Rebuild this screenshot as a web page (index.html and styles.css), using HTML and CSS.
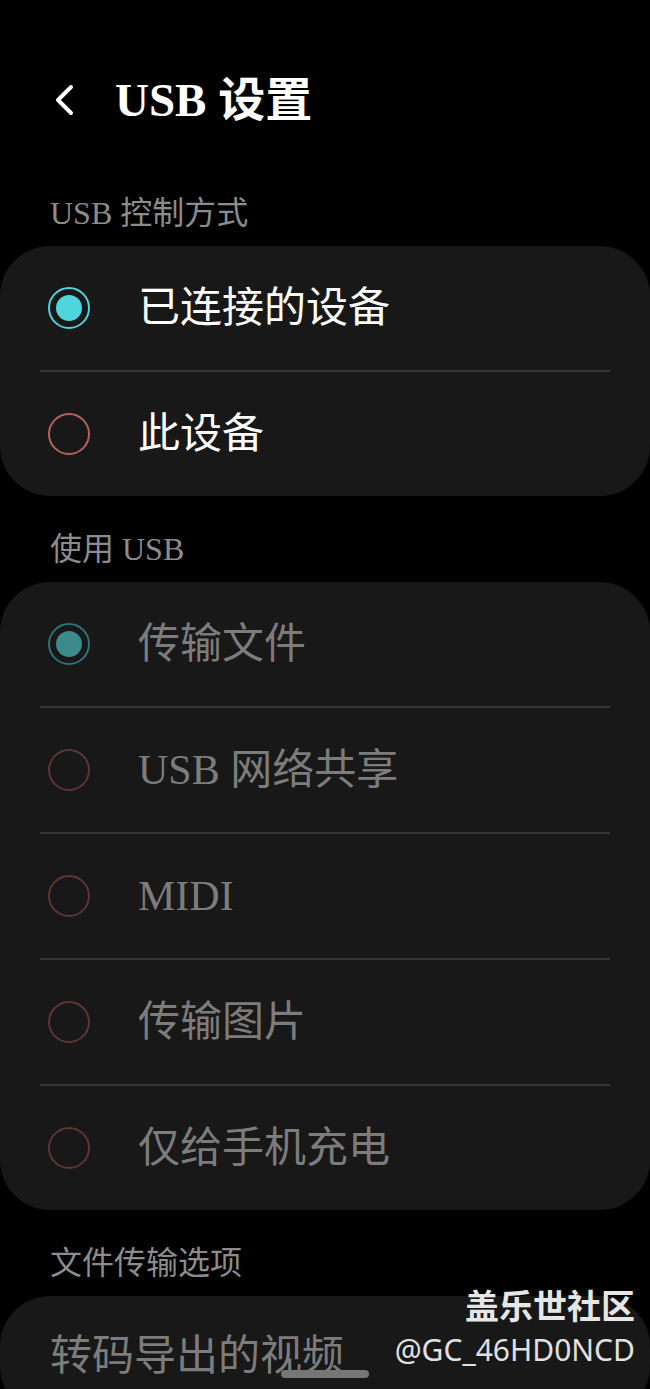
FILE: index.html
```html
<!DOCTYPE html>
<html lang="zh">
<head>
<meta charset="utf-8">
<title>USB 设置</title>
<link rel="stylesheet" href="styles.css">
</head>
<body>
<div class="screen">
  <header class="topbar">
    <svg class="back" width="24" height="34" viewBox="0 0 24 34"><polyline points="19,4 6,17 19,30" fill="none" stroke="#fff" stroke-width="4" stroke-linecap="round" stroke-linejoin="round"/></svg>
    <h1 class="title">USB 设置</h1>
  </header>

  <div class="section-label">USB 控制方式</div>
  <div class="card">
    <div class="row"><span class="radio on"></span><span class="label">已连接的设备</span></div>
    <div class="divider"></div>
    <div class="row"><span class="radio"></span><span class="label">此设备</span></div>
  </div>

  <div class="section-label">使用 USB</div>
  <div class="card disabled">
    <div class="row"><span class="radio on"></span><span class="label">传输文件</span></div>
    <div class="divider"></div>
    <div class="row"><span class="radio"></span><span class="label">USB 网络共享</span></div>
    <div class="divider"></div>
    <div class="row"><span class="radio"></span><span class="label">MIDI</span></div>
    <div class="divider"></div>
    <div class="row"><span class="radio"></span><span class="label">传输图片</span></div>
    <div class="divider"></div>
    <div class="row"><span class="radio"></span><span class="label">仅给手机充电</span></div>
  </div>

  <div class="section-label">文件传输选项</div>
  <div class="card">
    <div class="row plain"><span class="label dim">转码导出的视频</span></div>
  </div>

  <div class="watermark">
    <div class="wm-name">盖乐世社区</div>
    <div class="wm-id">@GC_46HD0NCD</div>
  </div>
  <div class="home-bar"></div>
</div>
</body>
</html>
```

FILE: styles.css
```css
html, body {
  margin: 0;
  padding: 0;
  background: #000;
}
body {
  font-family: "Liberation Serif", "Noto Sans CJK SC", serif;
  color: #fff;
}
.screen {
  position: relative;
  width: 650px;
  height: 1389px;
  overflow: hidden;
  background: #000;
}
.topbar {
  display: flex;
  align-items: center;
  height: 60px;
  padding: 70px 0 31px 52px;
}
.back {
  display: block;
}
.title {
  margin: 0 0 0 39px;
  font-size: 47px;
  font-weight: 700;
  line-height: 60px;
  color: #fff;
}
.section-label {
  padding: 37px 0 17px 50px;
  font-size: 32px;
  line-height: 32px;
  color: #8c8c8c;
}
.topbar + .section-label {
  padding-top: 36px;
}
.card {
  background: #181818;
  border-radius: 50px;
  display: flex;
  flex-direction: column;
}
.row {
  display: flex;
  align-items: center;
  height: 124px;
  padding-left: 48px;
}
.row.plain {
  padding-left: 50px;
  height: 120px;
}
.divider {
  height: 2px;
  margin: 0 40px;
  background: #363636;
}
.radio {
  box-sizing: border-box;
  width: 42px;
  height: 42px;
  border-radius: 50%;
  border: 2.5px solid #b5625f;
  display: flex;
  align-items: center;
  justify-content: center;
  flex: none;
}
.radio.on {
  border-color: #4fd2d8;
}
.radio.on::after {
  content: "";
  width: 26px;
  height: 26px;
  border-radius: 50%;
  background: #4fd6dd;
}
.label {
  margin-left: 48px;
  font-size: 42px;
  line-height: 48px;
  color: #fff;
}
.label.dim {
  margin-left: 0;
  color: #7c7c7c;
}
.disabled .label {
  color: #7c7c7c;
}
.disabled .radio {
  border-color: #5e3534;
}
.disabled .radio.on {
  border-color: #2f7174;
}
.disabled .radio.on::after {
  background: #3a8a8e;
}
.watermark {
  position: absolute;
  right: 15px;
  top: 1282px;
  text-align: right;
  font-family: "Noto Sans", "Noto Sans CJK SC", sans-serif;
}
.wm-name {
  font-family: "Noto Sans CJK SC", sans-serif;
  font-weight: 700;
  font-size: 34px;
  line-height: 46px;
  color: #e6e6e6;
}
.wm-id {
  font-size: 30px;
  line-height: 40px;
  margin-top: 2px;
  color: #e0e0e0;
}
.home-bar {
  position: absolute;
  left: 281px;
  top: 1370px;
  width: 88px;
  height: 8px;
  border-radius: 4px;
  background: #767676;
}
```
